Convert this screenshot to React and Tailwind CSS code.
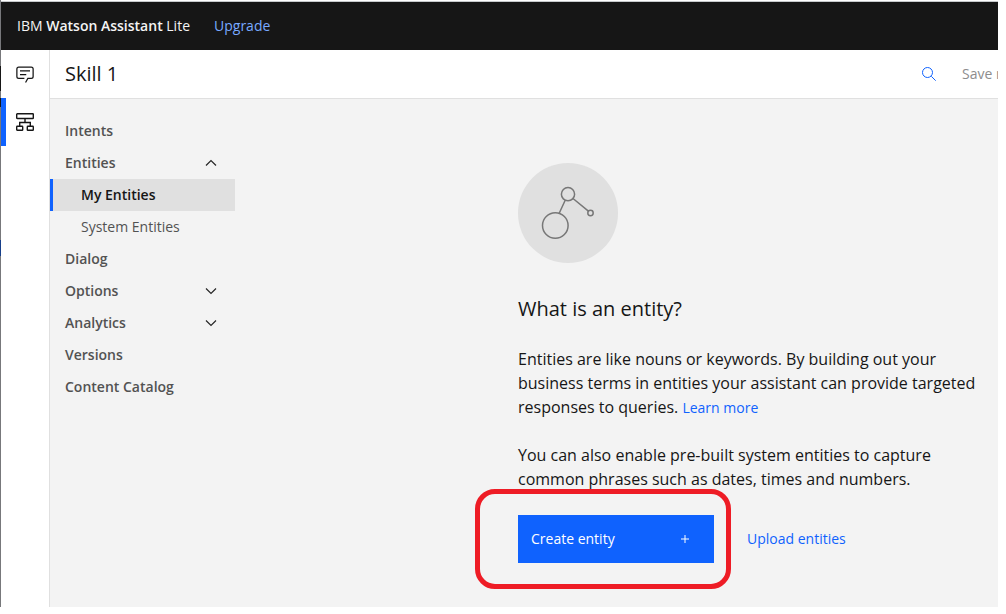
function ChatIcon() {
  return (
    <svg viewBox="0 0 32 32" className="size-5" fill="currentColor" aria-hidden="true">
      <path d="M17.74 30 16 29l4-7h6a2 2 0 0 0 2-2V8a2 2 0 0 0-2-2H6a2 2 0 0 0-2 2v12a2 2 0 0 0 2 2h9v2H6a4 4 0 0 1-4-4V8a4 4 0 0 1 4-4h20a4 4 0 0 1 4 4v12a4 4 0 0 1-4 4h-4.840z" />
      <path d="M8 10h16v2H8zM8 16h10v2H8z" />
    </svg>
  );
}

function FlowIcon() {
  return (
    <svg viewBox="0 0 20 20" className="size-5" fill="none" stroke="currentColor" strokeWidth="1.4" aria-hidden="true">
      <rect x="1.700" y="1.700" width="16.600" height="4.800" rx="0.600" />
      <rect x="1.700" y="14.300" width="6" height="4" rx="0.600" />
      <rect x="12.300" y="14.300" width="6" height="4" rx="0.600" />
      <path d="M10 6.500v4M4.700 14.300v-3.800h10.600v3.800" />
    </svg>
  );
}

function SearchIcon() {
  return (
    <svg viewBox="0 0 16 16" className="size-4" fill="none" stroke="currentColor" strokeWidth="1" aria-hidden="true">
      <circle cx="6.500" cy="6.500" r="5" />
      <path d="m10.300 10.300 4.400 4.400" />
    </svg>
  );
}

function Chevron({ up }) {
  return (
    <svg viewBox="0 0 16 16" className="size-4" fill="none" stroke="currentColor" strokeWidth="1.2" aria-hidden="true">
      <path d={up ? "m3 10.500 5-5 5 5" : "m3 5.500 5 5 5-5"} />
    </svg>
  );
}

function EntityIllustration() {
  return (
    <svg viewBox="0 0 100 100" className="size-[100px]" fill="none" aria-hidden="true">
      <circle cx="50" cy="50" r="50" fill="#e0e0e0" />
      <g stroke="#777777" strokeWidth="1.500">
        <circle cx="50" cy="31.200" r="6.600" />
        <circle cx="37.300" cy="62.500" r="12.800" />
        <circle cx="72.500" cy="50" r="2.700" />
        <path d="M47.200 37.200 41.200 50.300M55 35.500 70.400 48.200" />
      </g>
    </svg>
  );
}

const navItems = [
  { label: "Intents" },
  {
    label: "Entities",
    open: true,
    children: [
      { label: "My Entities", current: true },
      { label: "System Entities" },
    ],
  },
  { label: "Dialog" },
  { label: "Options", open: false },
  { label: "Analytics", open: false },
  { label: "Versions" },
  { label: "Content Catalog" },
];

function SkillNav() {
  return (
    <nav aria-label="Skill" className="w-[185px] shrink-0 pt-4 text-sm font-semibold text-[#525252]">
      <ul>
        {navItems.map((item) => (
          <li key={item.label}>
            {item.open === undefined ? (
              <a href="#" className="flex h-8 items-center pl-[15px]">
                {item.label}
              </a>
            ) : (
              <button
                type="button"
                aria-expanded={item.open}
                className="flex h-8 w-full items-center justify-between pr-4 pl-[15px]"
              >
                {item.label}
                <span className="text-[#262626]">
                  <Chevron up={item.open} />
                </span>
              </button>
            )}
            {item.children && (
              <ul>
                {item.children.map((child) => (
                  <li key={child.label}>
                    <a
                      href="#"
                      aria-current={child.current ? "page" : undefined}
                      className={
                        child.current
                          ? "flex h-8 items-center border-l-[3px] border-[#0f62fe] bg-[#e0e0e0] pl-7 text-[#161616]"
                          : "flex h-8 items-center pl-[31px] font-normal"
                      }
                    >
                      {child.label}
                    </a>
                  </li>
                ))}
              </ul>
            )}
          </li>
        ))}
      </ul>
    </nav>
  );
}

export default function App() {
  return (
    <div className="flex min-h-screen bg-white pr-2 pb-[7px] font-['Open_Sans',sans-serif] text-[#161616]">
      <div className="w-px shrink-0 bg-[linear-gradient(#77787b_0_66px,#161616_66px_91px,#77787b_91px_98px,#161616_98px_107px,#77787b_107px_240px,#173f8a_240px_256px,#77787b_256px)]" />
      <div className="flex min-w-0 grow flex-col">
        <div className="mt-px h-px bg-[#c6c9cb]" />
        <header className="flex h-12 shrink-0 items-center gap-6 bg-[#161616] pl-4 text-sm text-[#f4f4f4]">
          <span>
            IBM <strong className="font-semibold">Watson Assistant</strong> Lite
          </span>
          <a href="#" className="text-[#78a9ff]">
            Upgrade
          </a>
        </header>
        <div className="flex grow">
          <nav aria-label="Main" className="flex w-[49px] shrink-0 flex-col border-r border-[#e0e0e0]">
            <a href="#" aria-label="Assistants" className="flex h-12 items-center justify-center">
              <ChatIcon />
            </a>
            <a
              href="#"
              aria-label="Skills"
              aria-current="page"
              className="flex h-12 items-center border-l-[5px] border-[#0f62fe] pl-[9px]"
            >
              <FlowIcon />
            </a>
          </nav>
          <div className="flex min-w-0 grow flex-col">
            <div className="flex h-[49px] shrink-0 items-center justify-between border-b border-[#e0e0e0] pl-[15px]">
              <h1 className="text-xl">Skill 1</h1>
              <div className="flex items-center gap-[25px]">
                <button type="button" aria-label="Search" className="text-[#0f62fe]">
                  <SearchIcon />
                </button>
                <button type="button" disabled className="w-9 overflow-hidden text-left text-sm whitespace-nowrap text-[#8d8d8d]">
                  Save new version
                </button>
              </div>
            </div>
            <div className="flex grow justify-between bg-[#f3f3f3]">
              <SkillNav />
              <main className="mr-5 w-[460px] pt-16 pb-11">
                <EntityIllustration />
                <h2 className="mt-8 text-xl leading-7">What is an entity?</h2>
                <p className="mt-6 text-base leading-6">
                  Entities are like nouns or keywords. By building out your business terms in entities your
                  assistant can provide targeted responses to queries.{" "}
                  <a href="#" className="text-sm text-[#0f62fe]">
                    Learn more
                  </a>
                </p>
                <p className="mt-6 text-base leading-6">
                  You can also enable pre-built system entities to capture common phrases such as dates, times
                  and numbers.
                </p>
                <div className="mt-6 flex items-center gap-[33px] text-sm">
                  <div className="relative">
                    <button
                      type="button"
                      className="flex h-12 w-[196px] items-center justify-between bg-[#0f62fe] pr-[25px] pl-[13px] text-white"
                    >
                      Create entity
                      <svg viewBox="0 0 8 8" className="size-2" stroke="currentColor" strokeWidth="1" aria-hidden="true">
                        <path d="M4 0v8M0 4h8" />
                      </svg>
                    </button>
                    <div className="pointer-events-none absolute -top-[26px] -right-[17px] -bottom-[26px] -left-[43px] rounded-[20px] border-[5px] border-[#ee1c25]" />
                  </div>
                  <a href="#" className="text-[#0f62fe]">
                    Upload entities
                  </a>
                </div>
              </main>
            </div>
          </div>
        </div>
      </div>
    </div>
  );
}
